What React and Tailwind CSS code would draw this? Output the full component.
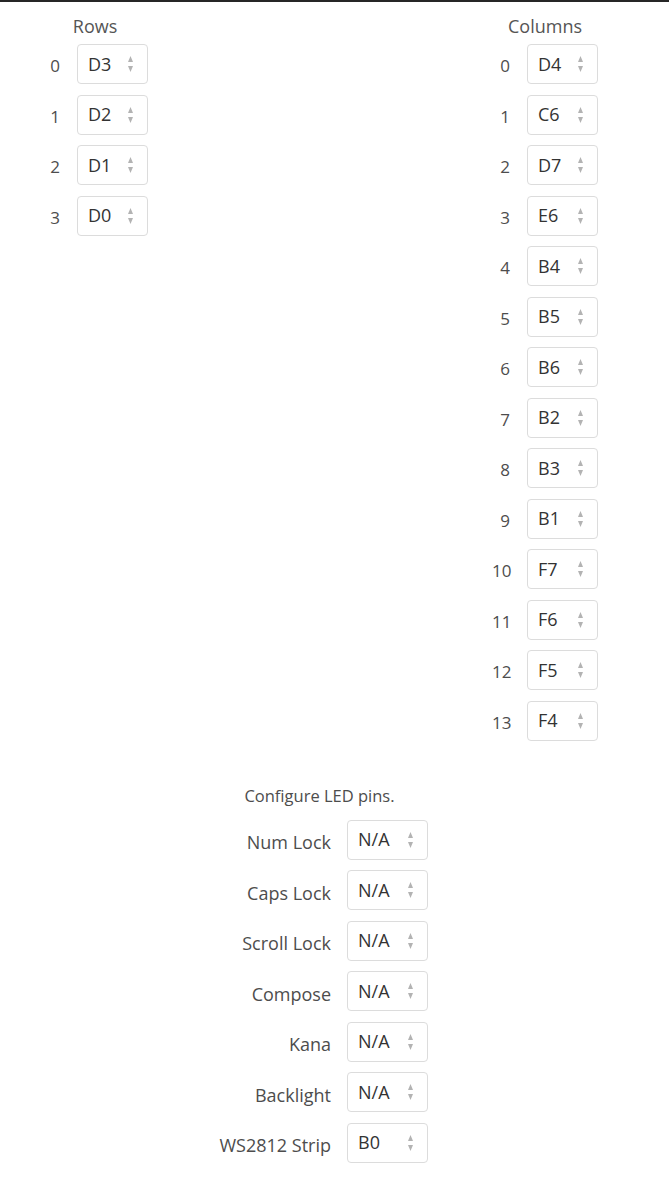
import React from 'react'

const ROWS = ['D3', 'D2', 'D1', 'D0']
const COLUMNS = ['D4', 'C6', 'D7', 'E6', 'B4', 'B5', 'B6', 'B2', 'B3', 'B1', 'F7', 'F6', 'F5', 'F4']
const LEDS = [
  ['Num Lock', 'N/A'],
  ['Caps Lock', 'N/A'],
  ['Scroll Lock', 'N/A'],
  ['Compose', 'N/A'],
  ['Kana', 'N/A'],
  ['Backlight', 'N/A'],
  ['WS2812 Strip', 'B0'],
]

function Arrows() {
  return (
    <svg width="7" height="16" viewBox="0 0 7 16" className="absolute right-[13px] top-1/2 -translate-y-1/2">
      <polygon points="3.5,0 6,6 1,6" fill="#b3b3b3" />
      <polygon points="1,10 6,10 3.5,16" fill="#b3b3b3" />
    </svg>
  )
}

function PinSelect({ value, width = 'w-[71px]' }) {
  return (
    <div className={`relative ${width} h-[40px] shrink-0 flex items-center pl-[10px] border border-[#dcdcdc] rounded-[4px] bg-white text-[18px] text-[#333]`}>
      {value}
      <Arrows />
    </div>
  )
}

function PinGroup({ title, pins }) {
  return (
    <div className="w-[106px]">
      <div className="text-center text-[18px] leading-[24px] text-[#555] mb-[6px]">{title}</div>
      <div className="flex flex-col gap-[10.5px]">
        {pins.map((pin, idx) => (
          <div key={idx} className="flex items-center gap-[17px] h-[40px]">
            <span className="w-[18px] text-right text-[17px] text-[#4d4d4d] pt-[4px] whitespace-nowrap">{idx}</span>
            <PinSelect value={pin} />
          </div>
        ))}
      </div>
    </div>
  )
}

export default function App() {
  return (
    <div className="min-h-screen bg-white border-t-2 border-[#262626] font-['Open_Sans',sans-serif] pb-[35px]">
      <div className="flex justify-between pl-[42px] pr-[71px] pt-[12px]">
        <div className="self-start">
          <PinGroup title="Rows" pins={ROWS} />
        </div>
        <PinGroup title="Columns" pins={COLUMNS} />
      </div>

      <div className="ml-[219px] mt-[44px]">
        <div className="w-[209px] pr-[8px] text-center text-[16.5px] leading-[22px] text-[#4d4d4d] mb-[13px]">
          Configure LED pins.
        </div>
        <div className="flex flex-col gap-[10.5px]">
          {LEDS.map(([label, value]) => (
            <div key={label} className="flex items-center gap-[16px] h-[40px]">
              <span className="w-[112px] text-right text-[18px] text-[#4d4d4d] pt-[6px] whitespace-nowrap">{label}</span>
              <PinSelect value={value} width="w-[81px]" />
            </div>
          ))}
        </div>
      </div>
    </div>
  )
}
